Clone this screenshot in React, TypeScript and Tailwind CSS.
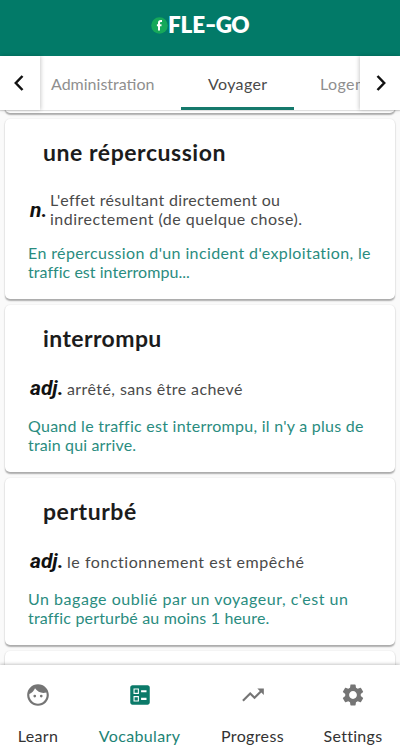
import { MdBallot, MdFace, MdSettings, MdTrendingUp } from "react-icons/md";

type Line = { text: string; tracking: string };
type Entry = {
  title: string;
  titleTracking: string;
  kind: string;
  kindClass: string;
  meaning: Line[];
  example: Line[];
  cardClass: string;
};

const entries: Entry[] = [
  {
    title: "une répercussion",
    titleTracking: "tracking-[0.55px]",
    kind: "n.",
    kindClass: "w-[22px] pt-[3px]",
    meaning: [
      { text: "L'effet résultant directement ou", tracking: "tracking-[0.33px]" },
      { text: "indirectement (de quelque chose).", tracking: "tracking-[0.5px]" },
    ],
    example: [
      { text: "En répercussion d'un incident d'exploitation, le", tracking: "tracking-[0.38px]" },
      { text: "traffic est interrompu...", tracking: "tracking-[0.04px]" },
    ],
    cardClass: "h-[180px]",
  },
  {
    title: "interrompu",
    titleTracking: "tracking-[0.4px]",
    kind: "adj.",
    kindClass: "w-[39px]",
    meaning: [{ text: "arrêté, sans être achevé", tracking: "tracking-[0.42px]" }],
    example: [
      { text: "Quand le traffic est interrompu, il n'y a plus de", tracking: "tracking-[0.26px]" },
      { text: "train qui arrive.", tracking: "tracking-[0.14px]" },
    ],
    cardClass: "h-[167px]",
  },
  {
    title: "perturbé",
    titleTracking: "tracking-[0.55px]",
    kind: "adj.",
    kindClass: "w-[39px]",
    meaning: [{ text: "le fonctionnement est empêché", tracking: "tracking-[0.54px]" }],
    example: [
      { text: "Un bagage oublié par un voyageur, c'est un", tracking: "tracking-[0.52px]" },
      { text: "traffic perturbé au moins 1 heure.", tracking: "tracking-[0.17px]" },
    ],
    cardClass: "h-[167px]",
  },
];

const cardBase =
  "mx-[5px] shrink-0 rounded-[5px] bg-white shadow-[0_1.5px_1.5px_rgba(0,0,0,0.3),0_0_2px_rgba(0,0,0,0.07)]";

function Lines({ lines }: { lines: Line[] }) {
  return (
    <>
      {lines.map((l) => (
        <span key={l.text} className={`block w-max whitespace-nowrap ${l.tracking}`}>
          {l.text}
        </span>
      ))}
    </>
  );
}

function Card({ entry }: { entry: Entry }) {
  return (
    <article className={`${cardBase} ${entry.cardClass} pl-[23px] pt-[19px]`}>
      <h2 className={`ml-[15px] w-max text-[23px] font-bold leading-[28px] text-[#1c1c1c] ${entry.titleTracking}`}>
        {entry.title}
      </h2>
      <div className="mt-[24px] flex min-h-[25px] items-center">
        <span className={`shrink-0 pl-[2px] font-['Roboto',sans-serif] text-[21px] font-bold italic leading-[19px] text-[#111] ${entry.kindClass}`}>
          {entry.kind}
        </span>
        <p className="text-[16px] leading-[19px] text-[#4a4a4a]">
          <Lines lines={entry.meaning} />
        </p>
      </div>
      <p className="mt-[15px] text-[16px] leading-[19px] text-[#2a8c80]">
        <Lines lines={entry.example} />
      </p>
    </article>
  );
}

function Chevron({ d }: { d: string }) {
  return (
    <svg width="10" height="16" viewBox="0 0 10 16" fill="none" stroke="#111" strokeWidth="2.5">
      <path d={d} />
    </svg>
  );
}

const nav = [
  { label: "Learn", Icon: MdFace, box: "w-[76px]", tracking: "tracking-[0.35px]", active: false },
  { label: "Vocabulary", Icon: MdBallot, box: "w-[127px]", tracking: "tracking-[0.35px]", active: true },
  { label: "Progress", Icon: MdTrendingUp, box: "w-[99px]", tracking: "tracking-[0.35px]", active: false },
  { label: "Settings", Icon: MdSettings, box: "w-[102px]", tracking: "tracking-[0.3px]", active: false },
];

export default function App() {
  return (
    <div className="flex h-[753px] w-[400px] flex-col overflow-hidden bg-[#fafafa] font-['Lato',sans-serif]">
      <header className="flex h-[56px] shrink-0 items-center bg-[#027a68] pl-[151px] pb-[6px]">
        <svg className="shrink-0" width="17" height="17" viewBox="0 0 17 17">
          <circle cx="8.5" cy="8.5" r="8.3" fill="#16a85a" />
          <path
            d="M11 4H9.9C8.6 4 8 4.7 8 5.8V13.6M5.9 8.3h4.6"
            fill="none"
            stroke="#fff"
            strokeWidth="2"
          />
        </svg>
        <span className="flex items-center text-[22.5px] font-extrabold leading-[28px] text-white">
          <span className="tracking-[-0.2px]">FLE</span>
          <span className="inline-block w-[11px] origin-left scale-x-[1.35]">-</span>
          <span className="tracking-[-0.8px]">GO</span>
        </span>
      </header>

      <nav className="relative z-10 flex h-[54px] shrink-0 bg-white shadow-[0_1px_1px_rgba(0,0,0,0.12)]">
        <div className="z-10 flex w-[40px] shrink-0 items-center justify-center bg-white pr-[2px] shadow-[1px_0_4px_rgba(0,0,0,0.2)]">
          <Chevron d="M8.5 1 1.8 8l6.7 7" />
        </div>
        <div className="flex min-w-0 flex-1 overflow-hidden text-[16px] leading-[51px]">
          <span className="w-[141px] shrink-0 pl-[11px] pt-[2px] text-[#8f8f8f]">Administration</span>
          <span className="w-[113px] shrink-0 border-b-[3px] border-[#15796c] pl-[27px] pt-[2px] tracking-[0.35px] text-[#4a4a4a]">
            Voyager
          </span>
          <span className="shrink-0 pl-[26px] pt-[2px] tracking-[0.4px] text-[#8f8f8f]">Logement</span>
        </div>
        <div className="z-10 flex w-[40px] shrink-0 items-center justify-center bg-white pl-[2px] shadow-[-1px_0_4px_rgba(0,0,0,0.2)]">
          <Chevron d="M1.5 1 8.2 8l-6.7 7" />
        </div>
      </nav>

      <main className="flex min-h-0 flex-1 flex-col gap-[6px] overflow-hidden">
        <div className={`${cardBase} -mt-[20px] h-[23px]`} />
        {entries.map((e) => (
          <Card key={e.title} entry={e} />
        ))}
        <div className={`${cardBase} h-[40px]`} />
      </main>

      <footer className="relative z-10 flex h-[88px] shrink-0 bg-white shadow-[0_-1px_3px_rgba(0,0,0,0.22)]">
        {nav.map(({ label, Icon, box, tracking, active }) => (
          <div
            key={label}
            className={`flex shrink-0 flex-col items-center pt-[17px] ${box} ${active ? "text-[#0b7a69]" : "text-[#757575]"}`}
          >
            <Icon size={26} />
            <span className={`mt-[18px] text-[16px] leading-[20px] ${tracking} ${active ? "text-[#1c8375]" : "text-[#333]"}`}>
              {label}
            </span>
          </div>
        ))}
      </footer>
    </div>
  );
}
